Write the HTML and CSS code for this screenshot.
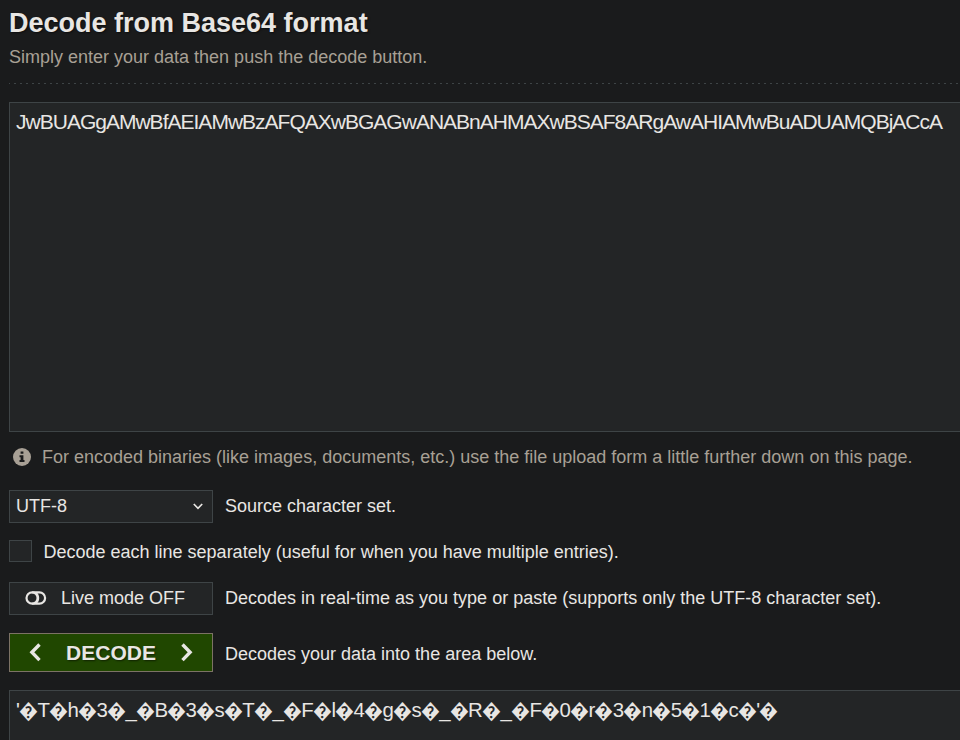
FILE: index.html
```html
<!DOCTYPE html>
<html lang="en">
<head>
<meta charset="utf-8">
<title>Decode from Base64 format</title>
<link rel="stylesheet" href="styles.css">
</head>
<body>
<main class="page">
  <header class="intro">
    <h1 class="title"><span>Decode from Base64 format</span></h1>
    <p class="subtitle"><span>Simply enter your data then push the decode button.</span></p>
  </header>
  <svg class="divider" width="951" height="1" aria-hidden="true"><line x1="-1" y1="0.5" x2="951" y2="0.5"/></svg>
  <div class="area input"><span>JwBUAGgAMwBfAEIAMwBzAFQAXwBGAGwANABnAHMAXwBSAF8ARgAwAHIAMwBuADUAMQBjACcA</span></div>
  <p class="note">
    <svg class="info" width="18" height="18" viewBox="0 0 18 18" aria-hidden="true"><circle cx="9" cy="9" r="9"/><path d="M7.6 3.5h2.8v2.3H7.6zM6.5 7.2h3.9v4.7h1.1v2H6.5v-2h1.1V9.2H6.5z"/></svg>
    <span>For encoded binaries (like images, documents, etc.) use the file upload form a little further down on this page.</span>
  </p>
  <div class="row charset">
    <div class="control select"><span>UTF-8</span><svg width="10" height="7" viewBox="0 0 10 7" aria-hidden="true"><path d="M0.8 1l4.2 4.3L9.2 1"/></svg></div>
    <span>Source character set.</span>
  </div>
  <label class="row lines"><span class="checkbox"></span><span class="caption">Decode each line separately (useful for when you have multiple entries).</span></label>
  <div class="row live">
    <div class="control toggle"><svg width="22" height="16" viewBox="0 0 22 16" aria-hidden="true"><rect x="1.5" y="1.3" width="18.6" height="11.4" rx="5.7"/><path d="M7.2 1.3a5.4 5.7 0 0 1 0 11.4M10.4 1.6c3.6 2.6 3.6 8.2 0 10.8"/></svg><span>Live mode OFF</span></div>
    <span>Decodes in real-time as you type or paste (supports only the UTF-8 character set).</span>
  </div>
  <div class="row submit">
    <div class="control decode"><svg width="13" height="20" viewBox="0 0 13 20" aria-hidden="true"><path d="M10.5 1.5L2.9 9.3l7.6 7.8"/></svg><b>DECODE</b><svg width="13" height="20" viewBox="0 0 13 20" aria-hidden="true"><path d="M2.5 1.5L10.1 9.3l-7.6 7.8"/></svg></div>
    <span class="caption">Decodes your data into the area below.</span>
  </div>
  <div class="area output"><span>'<i>�</i>T<i>�</i>h<i>�</i>3<i>�</i>_<i>�</i>B<i>�</i>3<i>�</i>s<i>�</i>T<i>�</i>_<i>�</i>F<i>�</i>l<i>�</i>4<i>�</i>g<i>�</i>s<i>�</i>_<i>�</i>R<i>�</i>_<i>�</i>F<i>�</i>0<i>�</i>r<i>�</i>3<i>�</i>n<i>�</i>5<i>�</i>1<i>�</i>c<i>�</i>'<i>�</i></span></div>
</main>
</body>
</html>
```
FILE: styles.css
```css
* { box-sizing: border-box; }
html, body { height: 100%; margin: 0; overflow: hidden; }
body {
  background: #1a1b1c;
  color: #e8e6e3;
  font: 18px/24px "Liberation Sans", Arial, sans-serif;
}
.page { display: flex; flex-direction: column; padding-left: 9px; white-space: nowrap; }
.title, .subtitle, .note { margin: 0; }
.title { height: 45px; font-size: 27px; line-height: 46px; text-shadow: 1px 1px 2px #0008; }
.subtitle { height: 38px; color: #a8a095; }
.divider { display: block; flex: none; }
.divider line { stroke: #3e4446; stroke-dasharray: 2 4; }
.area { background: #232526; border: 1px solid #3e4446; border-right: 0; padding: 6px; font-size: 21px; line-height: 26px; }
.input { height: 330px; margin-top: 18px; letter-spacing: -0.99px; }
.note { display: flex; align-items: center; gap: 11px; height: 24px; margin-top: 13px; padding-left: 4px; color: #a8a095; }
.info { fill: #a8a095; }
.info path { fill: #1a1b1c; }
.row { display: flex; align-items: center; gap: 12px; }
.control { display: flex; align-items: center; flex: none; width: 204px; height: 33px; border: 1px solid #3e4446; background: #232526; }
.control svg { fill: none; stroke: #e8e6e3; }
.charset { margin-top: 21px; height: 33px; }
.charset span, .live span { padding-bottom: 2px; }
.select { justify-content: space-between; padding: 0 9px 0 6px; }
.select svg { stroke-width: 1.7; }
.lines { margin-top: 17px; height: 22px; gap: 11.5px; }
.caption { padding-top: 2px; }
.checkbox { width: 23px; height: 22px; border: 1px solid #3e4446; background: #232526; }
.live { margin-top: 20px; height: 33px; }
.toggle { gap: 14px; padding-left: 15px; }
.toggle svg { stroke-width: 2.2; }
.submit { margin-top: 18px; height: 39px; }
.decode { justify-content: space-between; height: 39px; padding: 0 19px; background: #204700; border-color: #7c7265; font-size: 21px; text-shadow: 1px 1px 2px #0008; }
.decode svg { stroke-width: 3.4; }
.output { height: 60px; margin-top: 18px; font-size: 20.4px; }
.output i { display: inline-flex; justify-content: center; width: 17.6px; font-size: 21px; font-style: normal; transform: translateY(1px) scaleX(0.9); }
```
